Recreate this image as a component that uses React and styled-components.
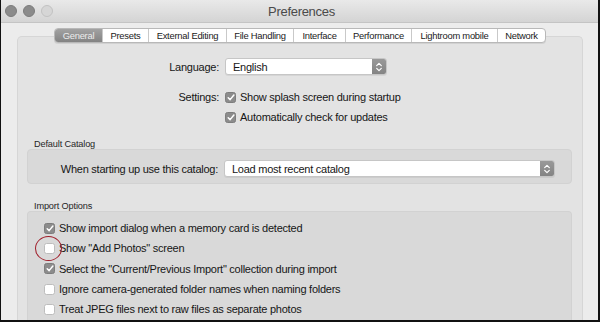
import React from "react";
import styled, { createGlobalStyle } from "styled-components";

const Global = createGlobalStyle`
  html, body { margin: 0; padding: 0; background: #000; }
  body { font-family: "Liberation Sans", Arial, sans-serif; }
  * { box-sizing: border-box; }
`;

const Window = styled.div`
  width: 600px;
  height: 322px;
  overflow: hidden;
  display: flex;
  flex-direction: column;
  background: #ececec;
  border-left: 1px solid #111;
  border-right: 2px solid #111;
  border-bottom: 2px solid #111;
`;

const TitleBar = styled.div`
  height: 23px;
  flex: none;
  display: grid;
  grid-template-columns: 1fr auto 1fr;
  align-items: center;
  padding: 0 0 0 4px;
  background: linear-gradient(#e9e9e9, #d4d4d4);
  border-bottom: 1px solid #c4c4c4;
`;

const Lights = styled.div`
  display: flex;
  gap: 6px;
`;

const Light = styled.span`
  width: 12px;
  height: 12px;
  border-radius: 50%;
  background: ${(p) => (p.$off ? "#d6d6d6" : "#8b8b8b")};
  border: 1px solid ${(p) => (p.$off ? "#c2c2c2" : "#7c7c7c")};
`;

const Title = styled.div`
  font-size: 13px;
  letter-spacing: -0.3px;
  color: #4a4a4a;
  padding-top: 1px;
`;

const Body = styled.div`
  flex: 1;
  display: flex;
  flex-direction: column;
  padding: 5px 15px 0 16px;
`;

const Tabs = styled.div`
  align-self: center;
  display: flex;
  position: relative;
  z-index: 1;
  margin-bottom: -7px;
  background: #fff;
  border: 1px solid #b8b8b8;
  border-radius: 4px;
  box-shadow: 0 1px 0 rgba(0, 0, 0, 0.08);
  overflow: hidden;
`;

const Tab = styled.div`
  width: ${(p) => p.$w}px;
  height: 13px;
  display: flex;
  align-items: center;
  justify-content: center;
  font-size: 9.4px;
  letter-spacing: -0.25px;
  color: #1a1a1a;
  white-space: nowrap;
  border-left: 1px solid #c9c9c9;
  &:first-child { border-left: none; }
  ${(p) =>
    p.$active &&
    `
    background: linear-gradient(#a2a2a2, #838383);
    color: #ececec;
  `}
`;

const Panel = styled.div`
  flex: 1;
  background: #e3e3e3;
  border: 1px solid #d6d6d6;
  border-bottom: none;
  border-radius: 5px 5px 0 0;
  padding: 21px 8px 0 8px;
  display: flex;
  flex-direction: column;
`;

const FormGrid = styled.div`
  display: grid;
  grid-template-columns: ${(p) => p.$col}px 1fr;
  column-gap: 6px;
  align-items: center;
`;

const Label = styled.div`
  text-align: right;
  font-size: 11px;
  letter-spacing: -0.25px;
  color: #161616;
  white-space: nowrap;
  margin-top: ${(p) => p.$mt || 0}px;
`;

const Select = styled.div`
  width: ${(p) => p.$w}px;
  height: 17px;
  display: flex;
  align-items: center;
  background: #fff;
  border: 1px solid #c6c6c6;
  border-radius: 3px;
  box-shadow: 0 1px 0 rgba(0, 0, 0, 0.06);
  overflow: hidden;
`;

const SelectText = styled.div`
  flex: 1;
  font-size: 11px;
  letter-spacing: -0.25px;
  color: #161616;
  padding-left: 7px;
`;

const Stepper = styled.div`
  width: 14px;
  align-self: stretch;
  background: linear-gradient(#999, #848484);
  display: flex;
  align-items: center;
  justify-content: center;
`;

const CheckRow = styled.div`
  display: flex;
  align-items: center;
  gap: 4px;
  font-size: 11px;
  letter-spacing: -0.25px;
  color: #161616;
  height: ${(p) => p.$h || 20}px;
  margin-top: ${(p) => p.$mt || 0}px;
  white-space: nowrap;
  position: relative;
`;

const Box = styled.span`
  width: 11px;
  height: 11px;
  flex: none;
  border-radius: 2.5px;
  display: flex;
  align-items: center;
  justify-content: center;
  background: ${(p) => (p.$on ? "#8c8c8c" : "#fff")};
  border: 1px solid ${(p) => (p.$on ? "#7d7d7d" : "#bdbdbd")};
`;

const Highlight = styled.span`
  position: absolute;
  left: -9px;
  top: -2.5px;
  width: 27px;
  height: 25px;
  border: 1.5px solid #a01e2a;
  border-radius: 50%;
  pointer-events: none;
`;

const SectionTitle = styled.div`
  font-size: 9.2px;
  letter-spacing: -0.15px;
  line-height: 10px;
  color: #262626;
  padding-left: 8px;
  margin-top: ${(p) => p.$mt}px;
`;

const Group = styled.div`
  background: #d9d9d9;
  border: 1px solid #d2d2d2;
  border-radius: 4px;
  padding: ${(p) => p.$p};
  margin: 0 2px 0 1px;
  ${(p) => p.$open && "border-bottom: none; border-radius: 4px 4px 0 0; flex: 1;"}
`;

const Check = ({ on }) => (
  <Box $on={on}>
    {on && (
      <svg width="8" height="7" viewBox="0 0 9 8">
        <path d="M1.3 4.2 L3.5 6.4 L7.8 1.2" fill="none" stroke="#fff" strokeWidth="1.7" strokeLinecap="round" strokeLinejoin="round" />
      </svg>
    )}
  </Box>
);

const Arrows = () => (
  <svg width="8" height="12" viewBox="0 0 8 12">
    <path d="M1.7 4.6 L4 2.3 L6.3 4.6 M1.7 7.4 L4 9.7 L6.3 7.4" fill="none" stroke="#fff" strokeWidth="1.2" strokeLinecap="round" strokeLinejoin="round" />
  </svg>
);

const tabs = [
  ["General", 47],
  ["Presets", 46],
  ["External Editing", 78],
  ["File Handling", 67],
  ["Interface", 52],
  ["Performance", 66],
  ["Lightroom mobile", 86],
  ["Network", 48],
];

const imports = [
  [true, "Show import dialog when a memory card is detected"],
  [false, 'Show "Add Photos" screen', true],
  [true, 'Select the "Current/Previous Import" collection during import'],
  [false, "Ignore camera-generated folder names when naming folders"],
  [false, "Treat JPEG files next to raw files as separate photos"],
];

export default function App() {
  return (
    <>
      <Global />
      <Window>
        <TitleBar>
          <Lights>
            <Light />
            <Light />
            <Light $off />
          </Lights>
          <Title>Preferences</Title>
          <div />
        </TitleBar>
        <Body>
          <Tabs>
            {tabs.map(([t, w], i) => (
              <Tab key={t} $w={w} $active={i === 0}>
                {t}
              </Tab>
            ))}
          </Tabs>
          <Panel>
            <FormGrid $col={193}>
              <Label>Language:</Label>
              <Select $w={162}>
                <SelectText>English</SelectText>
                <Stepper>
                  <Arrows />
                </Stepper>
              </Select>
              <Label $mt={12}>Settings:</Label>
              <CheckRow $mt={12}>
                <Check on />
                Show splash screen during startup
              </CheckRow>
              <div />
              <CheckRow>
                <Check on />
                Automatically check for updates
              </CheckRow>
            </FormGrid>
            <SectionTitle $mt={12}>Default Catalog</SectionTitle>
            <Group $p="10px 0 6px 0">
              <FormGrid $col={190}>
                <Label>When starting up use this catalog:</Label>
                <Select $w={331}>
                  <SelectText>Load most recent catalog</SelectText>
                  <Stepper>
                    <Arrows />
                  </Stepper>
                </Select>
              </FormGrid>
            </Group>
            <SectionTitle $mt={17}>Import Options</SectionTitle>
            <Group $open $p="6px 0 0 16px">
              {imports.map(([on, text, mark]) => (
                <CheckRow key={text} $h={20.3}>
                  <Check on={on} />
                  {text}
                  {mark && <Highlight />}
                </CheckRow>
              ))}
            </Group>
          </Panel>
        </Body>
      </Window>
    </>
  );
}
